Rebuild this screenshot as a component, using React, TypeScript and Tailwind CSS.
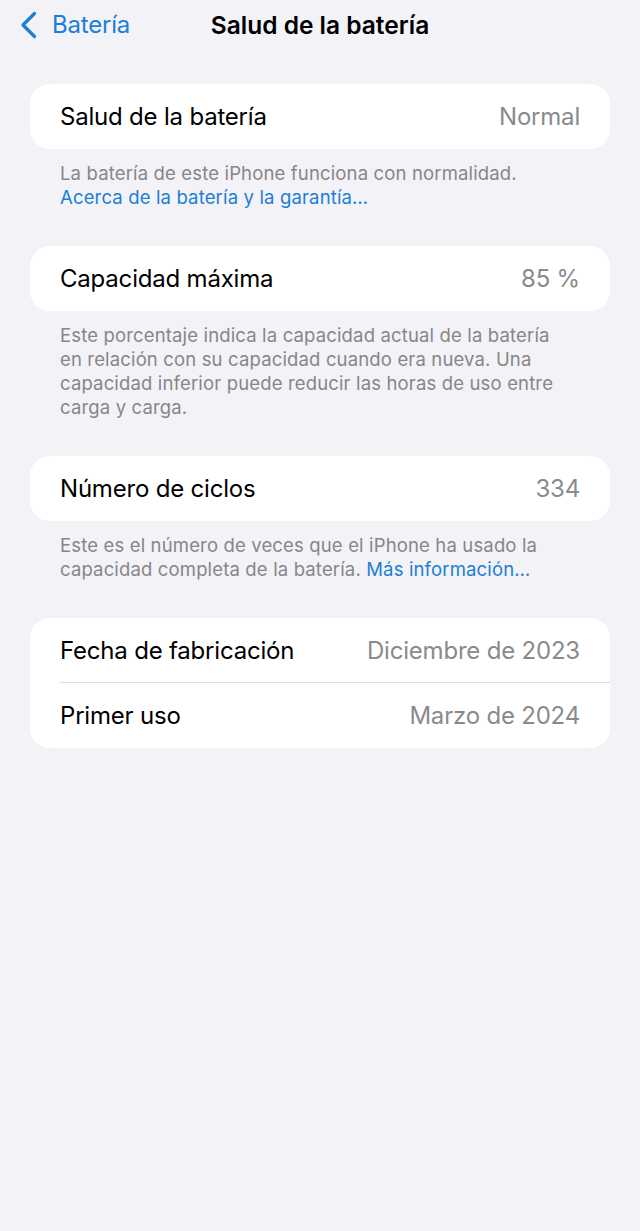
import React from "react";

const font = { fontFamily: "Inter, 'Noto Sans', sans-serif" };

function Row({ label, value, divider }: { label: string; value: string; divider?: boolean }) {
  return (
    <div className="relative flex h-[65px] items-center justify-between pl-[30px] pr-[30px]">
      <span className="text-[24px] tracking-[-0.2px] text-black">{label}</span>
      <span className="text-[24px] tracking-[-0.2px] text-[#8a8a8e]">{value}</span>
      {divider && <div className="absolute bottom-0 left-[30px] right-0 h-px bg-[#dcdce0]" />}
    </div>
  );
}

function Footer({ children }: { children: React.ReactNode }) {
  return (
    <div className="px-[30px] pt-[12px] pb-[37px] text-[18.5px] leading-[24px] tracking-[0.15px] text-[#86868b]">
      {children}
    </div>
  );
}

export default function App() {
  return (
    <div className="min-h-[1231px] w-[640px] bg-[#f2f2f7]" style={font}>
      <div className="relative flex h-[50px] items-center">
        <div className="flex items-center pl-[20px]">
          <svg width="17" height="28" viewBox="0 0 17 28" fill="none">
            <path d="M14.5 2.5 L3 14 L14.5 25.5" stroke="#1c7ed6" strokeWidth="3.2" strokeLinecap="round" strokeLinejoin="round" />
          </svg>
          <span className="ml-[15px] text-[24px] tracking-[-0.2px] text-[#1c7ed6]">Batería</span>
        </div>
        <div className="absolute left-0 right-0 text-center text-[24.5px] font-semibold text-black">
          Salud de la batería
        </div>
      </div>
      <div className="px-[30px] pt-[34px]">
        <div className="overflow-hidden rounded-[20px] bg-white">
          <Row label="Salud de la batería" value="Normal" />
        </div>
        <Footer>
          La batería de este iPhone funciona con normalidad.
          <br />
          <span className="text-[#1c7ed6]">Acerca de la batería y la garantía…</span>
        </Footer>
        <div className="overflow-hidden rounded-[20px] bg-white">
          <Row label="Capacidad máxima" value="85 %" />
        </div>
        <Footer>
          Este porcentaje indica la capacidad actual de la batería
          <br />
          en relación con su capacidad cuando era nueva. Una
          <br />
          capacidad inferior puede reducir las horas de uso entre
          <br />
          carga y carga.
        </Footer>
        <div className="overflow-hidden rounded-[20px] bg-white">
          <Row label="Número de ciclos" value="334" />
        </div>
        <Footer>
          Este es el número de veces que el iPhone ha usado la
          <br />
          capacidad completa de la batería.{" "}
          <span className="text-[#1c7ed6]">Más información…</span>
        </Footer>
        <div className="overflow-hidden rounded-[20px] bg-white">
          <Row label="Fecha de fabricación" value="Diciembre de 2023" divider />
          <Row label="Primer uso" value="Marzo de 2024" />
        </div>
      </div>
    </div>
  );
}
